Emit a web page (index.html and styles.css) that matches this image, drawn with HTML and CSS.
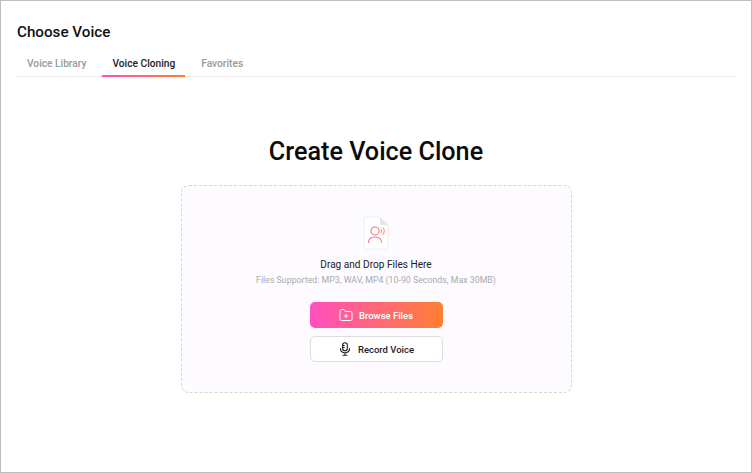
FILE: index.html
```html
<!DOCTYPE html>
<html lang="en">
<head>
  <meta charset="UTF-8">
  <title>Choose Voice</title>
  <link rel="stylesheet" href="styles.css">
</head>
<body>
  <div class="window">
    <h2 class="title">Choose Voice</h2>
    <div class="tabs">
      <div class="tab">Voice Library</div>
      <div class="tab active">Voice Cloning</div>
      <div class="tab">Favorites</div>
    </div>

    <h1 class="heading">Create Voice Clone</h1>

    <div class="dropzone">
      <svg class="file-icon" width="26" height="34" viewBox="0 0 26 34" fill="none">
        <defs>
          <linearGradient id="person" x1="0" y1="0" x2="1" y2="1">
            <stop offset="0" stop-color="#f45bb0"/>
            <stop offset="1" stop-color="#f98a6a"/>
          </linearGradient>
        </defs>
        <path d="M2.500 1H17L25 9V31.500A1.500 1.500 0 0 1 23.500 33H2.500A1.500 1.500 0 0 1 1 31.500V2.500A1.500 1.500 0 0 1 2.500 1Z" fill="#fff" stroke="#f0eef0"/>
        <path d="M17 1V7.500A1.500 1.500 0 0 0 18.500 9H25Z" fill="#e6e4e8"/>
        <circle cx="12" cy="15" r="4" stroke="url(#person)" stroke-width="1.100"/>
        <path d="M5.500 26.500C5.500 23 8 21 12 21S18.500 23 18.500 26.500" stroke="url(#person)" stroke-width="1.100" stroke-linecap="round"/>
        <path d="M18 13A3 3 0 0 1 18 17M20 11.500A5 5 0 0 1 20 18.500" stroke="#f98a6a" stroke-width="1" stroke-linecap="round"/>
      </svg>
      <div class="drop-title">Drag and Drop Files Here</div>
      <div class="drop-hint">Files Supported: MP3, WAV, MP4 (10-90 Seconds, Max 30MB)</div>
      <button class="btn btn-primary">
        <svg width="14" height="14" viewBox="0 0 14 14" fill="none" stroke="#fff" stroke-width="1" stroke-linecap="round" stroke-linejoin="round">
          <path d="M1 3A1.500 1.500 0 0 1 2.500 1.500H5L6.500 3.500H11.500A1.500 1.500 0 0 1 13 5V11A1.500 1.500 0 0 1 11.500 12.500H2.500A1.500 1.500 0 0 1 1 11Z"/>
          <path d="M7 6.200V9.800M5.200 8H8.800"/>
        </svg>
        Browse Files
      </button>
      <button class="btn btn-outline">
        <svg width="14" height="14" viewBox="0 0 14 14" fill="none" stroke="#222" stroke-width="1.100" stroke-linecap="round">
          <rect x="4.700" y="0.800" width="4.600" height="8" rx="2.300"/>
          <path d="M2.500 6.500C2.500 9 4.500 10.700 7 10.700S11.500 9 11.500 6.500M7 10.700V13.200M5 13.200H9M4.700 3.500H6.300M4.700 5.500H6.300"/>
        </svg>
        Record Voice
      </button>
    </div>
  </div>
</body>
</html>
```

FILE: styles.css
```css
* {
  box-sizing: border-box;
}

html, body {
  margin: 0;
  height: 100%;
}

body {
  font-family: Roboto, "Liberation Sans", sans-serif;
  background: #fff;
}

.window {
  height: 473px;
  padding: 22px 16px 0;
  border: 1px solid #bdbdbd;
  display: flex;
  flex-direction: column;
  align-items: center;
}

.title {
  align-self: flex-start;
  margin: 0;
  font-size: 15.2px;
  line-height: 19px;
  font-weight: 500;
  color: #111;
}

.tabs {
  align-self: stretch;
  display: flex;
  margin-top: 12px;
  height: 23px;
  border-bottom: 1px solid #ececec;
}

.tab {
  height: 23px;
  padding: 2px 10px 0;
  margin-right: 6px;
  font-size: 10.200px;
  line-height: 15px;
  font-weight: 500;
  color: #999;
}

.tab.active {
  color: #222;
  border-bottom: 2px solid;
  border-image: linear-gradient(90deg, #ff4fc0, #ff7f32) 1;
}

.heading {
  margin: 59px 0 0;
  font-size: 25.200px;
  line-height: 32px;
  font-weight: 500;
  color: #0b0b0b;
}

.dropzone {
  width: 391px;
  height: 208px;
  margin-top: 17px;
  padding-top: 30px;
  display: flex;
  flex-direction: column;
  align-items: center;
  background: #fdfbff;
  border: 1px dashed #d5dacb;
  border-radius: 8px;
}

.drop-title {
  margin-top: 7px;
  font-size: 10.100px;
  line-height: 15px;
  color: #222;
}

.drop-hint {
  margin-top: 1px;
  font-size: 8.800px;
  line-height: 14px;
  color: #aaa;
}

.btn {
  width: 133px;
  height: 26px;
  margin-top: 8px;
  display: flex;
  align-items: center;
  justify-content: center;
  gap: 6px;
  font-family: inherit;
  font-size: 9.500px;
  font-weight: 500;
  border-radius: 5px;
  padding: 0;
}

.btn-primary {
  margin-top: 15px;
  border: none;
  color: #fff;
  background: linear-gradient(90deg, #ff4fc0, #ff7f32);
}

.btn-outline {
  background: #fff;
  color: #222;
  border: 1px solid #ddd;
}
```
